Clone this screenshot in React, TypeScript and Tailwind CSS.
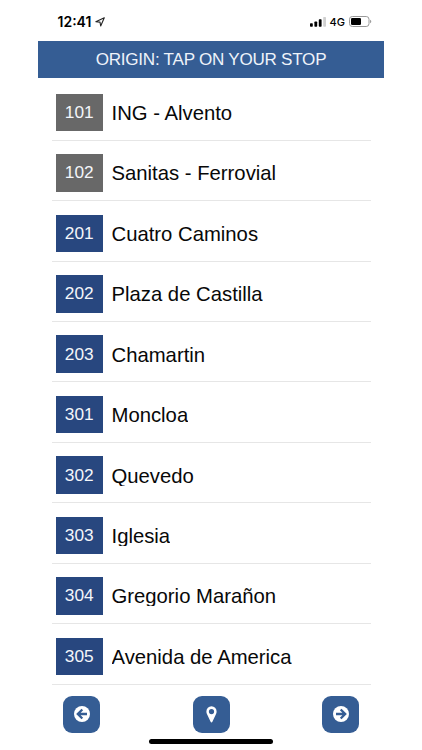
import React from "react";

type Stop = { id: string; name: string; gray?: boolean };

const stops: Stop[] = [
  { id: "101", name: "ING - Alvento", gray: true },
  { id: "102", name: "Sanitas - Ferrovial", gray: true },
  { id: "201", name: "Cuatro Caminos" },
  { id: "202", name: "Plaza de Castilla" },
  { id: "203", name: "Chamartin" },
  { id: "301", name: "Moncloa" },
  { id: "302", name: "Quevedo" },
  { id: "303", name: "Iglesia" },
  { id: "304", name: "Gregorio Marañon" },
  { id: "305", name: "Avenida de America" },
];

function StatusBar() {
  return (
    <div className="flex h-[41px] items-start justify-between pl-[57.5px] pr-[50px] pt-[12px]">
      <div className="flex h-[19px] items-center font-['Inter',sans-serif] text-[14px] font-semibold leading-[19px]">
        <span>12:41</span>
        <svg className="ml-[4px]" width="10" height="10" viewBox="0 0 10 10" fill="none" stroke="#222" strokeWidth="1.1" strokeLinejoin="round">
          <path d="M9.3.7 5.7 9 5 5.1.8 4.7Z" />
        </svg>
      </div>
      <div className="flex h-[19px] items-center">
        <svg width="16" height="10" viewBox="0 0 16 10">
          <rect x="0" y="6.3" width="2.8" height="3.4" rx=".7" />
          <rect x="4.4" y="4.6" width="2.8" height="5.1" rx=".7" />
          <rect x="8.8" y="2.3" width="2.8" height="7.4" rx=".7" />
          <rect x="13.2" y="0" width="2.8" height="9.7" rx=".7" fill="#d0d0d0" />
        </svg>
        <span className="ml-[4px] mt-[1px] font-['Inter',sans-serif] text-[11px] font-medium leading-[19px]">4G</span>
        <svg className="ml-[4px]" width="23" height="11" viewBox="0 0 23 11">
          <rect x=".5" y=".5" width="19.5" height="10" rx="2.8" fill="none" stroke="#999" />
          <rect x="2" y="2" width="10" height="7" rx="1.2" />
          <path d="M21.2 3.8c1.4.5 1.4 2.9 0 3.4Z" fill="#888" />
        </svg>
      </div>
    </div>
  );
}

function StopRow({ stop }: { stop: Stop }) {
  return (
    <li className="flex h-[60.45px] items-start border-b border-[#e6e6e6] pl-[4.5px] pt-[13.4px]">
      <span
        className={`flex h-[37.5px] w-[46.5px] items-center justify-center pt-[1px] text-[17.3px] text-[#f4f6fa] ${
          stop.gray ? "bg-[#686868]" : "bg-[#28477f]"
        }`}
      >
        {stop.id}
      </span>
      <span className="ml-[9px] mt-[6.2px] h-[23px] overflow-hidden whitespace-nowrap text-[20.3px] leading-[26px] text-[#080808]">
        {stop.name}
      </span>
    </li>
  );
}

function NavButton({ label, children }: { label: string; children: React.ReactNode }) {
  return (
    <button aria-label={label} className="flex h-[37px] w-[37px] items-center justify-center rounded-[9px] bg-[#355d94]">
      {children}
    </button>
  );
}

function ArrowCircle({ flip }: { flip?: boolean }) {
  return (
    <svg className={flip ? "rotate-180" : ""} width="16" height="16" viewBox="0 0 16 16">
      <circle cx="8" cy="8" r="8" fill="#fff" />
      <path d="M8.3 3.5 3.8 8l4.5 4.5M4.3 8H13" fill="none" stroke="#355d94" strokeWidth="2.3" />
    </svg>
  );
}

export default function App() {
  return (
    <div className="flex h-[750px] w-[422px] flex-col overflow-hidden bg-white font-['Liberation_Sans',Arial,sans-serif] text-black">
      <StatusBar />
      <header className="ml-[38px] flex h-[37px] w-[346px] items-center justify-center bg-[#355d94] text-[17.1px] tracking-[-0.26px] text-[#eef3fa]">
        ORIGIN: TAP ON YOUR STOP
      </header>
      <ul className="ml-[51.5px] mt-[2.3px] w-[319px]">
        {stops.map((stop) => (
          <StopRow key={stop.id} stop={stop} />
        ))}
      </ul>
      <nav className="ml-[63px] mt-[11.2px] flex w-[296px] justify-between">
        <NavButton label="Back">
          <ArrowCircle />
        </NavButton>
        <NavButton label="Location">
          <svg width="11" height="17" viewBox="0 0 11 17">
            <path
              fill="#fff"
              fillRule="evenodd"
              d="M5.5.3A5.1 5.1 0 0 0 .4 5.5c0 1.4.4 2.3.9 3.3l3.3 7c.4.8 1.4.8 1.8 0l3.3-7c.5-1 .9-1.9.9-3.3A5.1 5.1 0 0 0 5.5.3Zm0 2.7a2.6 2.6 0 1 1 0 5.2 2.6 2.6 0 0 1 0-5.2Z"
            />
          </svg>
        </NavButton>
        <NavButton label="Next">
          <ArrowCircle flip />
        </NavButton>
      </nav>
      <div className="ml-[149px] mt-[6px] h-[5px] w-[124px] shrink-0 rounded-full bg-black" />
    </div>
  );
}
